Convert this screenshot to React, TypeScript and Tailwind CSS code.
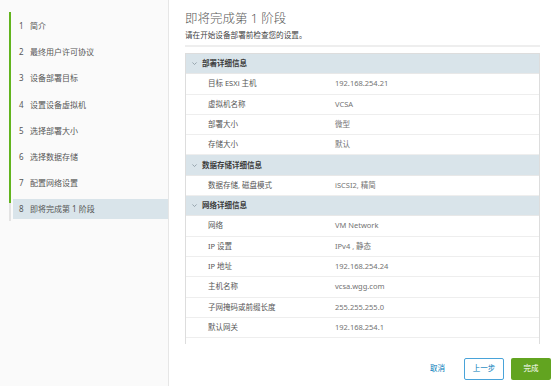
// vCenter Server Appliance 部署向导 — 第 1 阶段确认页

const STEPS = [
  '简介',
  '最终用户许可协议',
  '设备部署目标',
  '设置设备虚拟机',
  '选择部署大小',
  '选择数据存储',
  '配置网络设置',
  '即将完成第 1 阶段',
];

type Row = { label: string; value?: string; header?: boolean };

const ROWS: Row[] = [
  { label: '部署详细信息', header: true },
  { label: '目标 ESXi 主机', value: '192.168.254.21' },
  { label: '虚拟机名称', value: 'VCSA' },
  { label: '部署大小', value: '微型' },
  { label: '存储大小', value: '默认' },
  { label: '数据存储详细信息', header: true },
  { label: '数据存储, 磁盘模式', value: 'iSCSI2, 精简' },
  { label: '网络详细信息', header: true },
  { label: '网络', value: 'VM Network' },
  { label: 'IP 设置', value: 'IPv4 , 静态' },
  { label: 'IP 地址', value: '192.168.254.24' },
  { label: '主机名称', value: 'vcsa.wgg.com' },
  { label: '子网掩码或前缀长度', value: '255.255.255.0' },
  { label: '默认网关', value: '192.168.254.1' },
];

const font = { fontFamily: '"Noto Sans", "Noto Sans CJK SC", sans-serif' };

function Chevron() {
  return (
    <svg width="7" height="7" viewBox="0 0 10 10" className="shrink-0">
      <path d="M2 3.5 L5 6.5 L8 3.5" fill="none" stroke="#8c9aa3" strokeWidth="1.2" />
    </svg>
  );
}

export default function App() {
  const current = STEPS.length - 1;

  return (
    <div className="w-[554px] h-[386px] flex bg-white overflow-hidden" style={font}>
      {/* Sidebar */}
      <div className="w-[169px] shrink-0 h-full bg-[#fafafa] border-r border-[#e6e6e6] flex pt-[12px]">
        <div className="ml-[9px] w-[2px] flex flex-col">
          <div className="h-[191px] bg-[#62b41e]" />
          <div className="h-[18px] bg-[#e3e3e3]" />
        </div>
        <div className="flex-1 flex flex-col pt-[1px]">
          {STEPS.map((s, i) => (
            <div key={s} className="h-[26.2px] flex items-center pl-[2px]">
              <div
                className={`flex-1 h-[20px] flex items-center pl-[6px] text-[8px] text-[#565656] ${
                  i === current ? 'bg-[#d9e4ea]' : ''
                }`}
              >
                <span className="w-[11px]">{i + 1}</span>
                <span>{s}</span>
              </div>
            </div>
          ))}
        </div>
      </div>

      {/* Main */}
      <div className="flex-1 flex flex-col pl-[16px] pr-[14px]">
        <h1 className="mt-[9px] text-[12.5px] leading-[20px] text-[#595959] font-light">
          即将完成第 1 阶段
        </h1>
        <p className="text-[7.6px] leading-[12px] text-[#454545]">请在开始设备部署前检查您的设置。</p>
        <div className="mt-[4px] h-[2px] bg-[#eeeeee]" />

        <div className="mt-[6px] h-[291px] border border-[#dddddd] border-b-0 overflow-hidden">
          {ROWS.map((r) =>
            r.header ? (
              <div
                key={r.label}
                className="h-[20.3px] bg-[#d9e4ea] flex items-center pl-[5px] gap-[4px] text-[7.5px] font-bold text-[#3d3d3d] border-b border-[#e8e8e8]"
              >
                <Chevron />
                <span>{r.label}</span>
              </div>
            ) : (
              <div
                key={r.label}
                className="h-[20.3px] flex items-center border-b border-[#eeeeee] text-[7.5px] text-[#565656]"
              >
                <span className="w-[149px] pl-[22px]">{r.label}</span>
                <span className="text-[#737373]">{r.value}</span>
              </div>
            )
          )}
          <div className="h-[20.3px]" />
        </div>

        {/* Footer */}
        <div className="mt-[14px] -mr-[11px] flex items-center justify-end">
          <button className="text-[7.5px] text-[#0079b8] mr-[19px]">取消</button>
          <button className="w-[40px] h-[22px] border border-[#49a3d9] rounded-[2px] text-[7.5px] text-[#0079b8] bg-white">
            上一步
          </button>
          <button className="ml-[7px] w-[40px] h-[22px] rounded-[2px] text-[7.5px] text-white bg-[#62a420]">
            完成
          </button>
        </div>
      </div>
    </div>
  );
}
